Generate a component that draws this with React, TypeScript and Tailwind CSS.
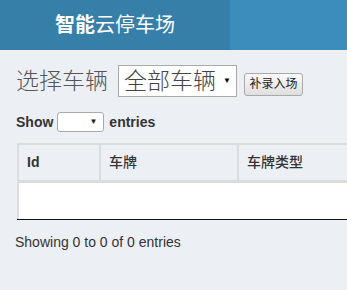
import React from "react";

const cjk = '"Liberation Sans", "Noto Sans CJK SC", sans-serif';

export default function App() {
  return (
    <div
      className="w-[347px] h-[290px] overflow-hidden bg-[#ecf0f5] text-[#333]"
      style={{ fontFamily: cjk }}
    >
      <header className="flex h-[50px]">
        <div className="w-[230px] bg-[#367fa9] flex items-center justify-center text-white text-[20px] leading-[50px]">
          <b>智能</b>
          <span>云停车场</span>
        </div>
        <div className="flex-1 bg-[#3c8dbc]" />
      </header>

      <section className="pt-[15px] pl-[16px]">
        <div className="flex items-center h-[32px]">
          <span className="text-[23px] leading-[32px] font-light text-[#555] mr-[10px]">选择车辆</span>
          <div className="relative flex items-center w-[119px] h-[32px] bg-white border border-[#aaa] pl-[5px] text-[23px] font-light text-[#444]">
            <span className="leading-[30px]">全部车辆</span>
            <span className="absolute right-[5px] top-[11px] text-[8px] leading-none text-black">▼</span>
          </div>
          <button className="ml-[7px] mt-[7px] h-[23px] w-[59px] rounded-[3px] border border-[#a9a9a9] bg-gradient-to-b from-[#fbfbfb] to-[#dedede] text-[12px] font-normal leading-[21px] text-[#222]">
            补录入场
          </button>
        </div>

        <div className="flex items-center mt-[15px] h-[20px] text-[14px] font-bold">
          <span>Show</span>
          <div className="relative ml-[4px] w-[47px] h-[20px] bg-white border border-[#aaa] rounded-[3px]">
            <span className="absolute right-[6px] top-[5px] text-[8px] leading-none text-[#222]">▼</span>
          </div>
          <span className="ml-[5px]">entries</span>
        </div>
      </section>

      <div className="mt-[11px] ml-[17px] w-[400px]">
        <div className="border-l-2 border-t-2 border-[#dcdcdc]">
          <div className="flex h-[35px] text-[14px] text-[#333] border-b-[3px] border-[#dcdcdc] box-content">
            <div className="w-[82px] px-2 flex items-center font-bold border-r-2 border-[#dcdcdc]">Id</div>
            <div className="w-[138px] px-2 flex items-center font-medium border-r-2 border-[#dcdcdc]">车牌</div>
            <div className="flex-1 px-2 flex items-center font-medium">车牌类型</div>
          </div>
          <div className="h-[36px] bg-white" />
        </div>
        <div className="h-px bg-[#111]" />
      </div>

      <div className="mt-[12px] ml-[15px] text-[14px] leading-[20px] text-[#333]">
        Showing 0 to 0 of 0 entries
      </div>
    </div>
  );
}
